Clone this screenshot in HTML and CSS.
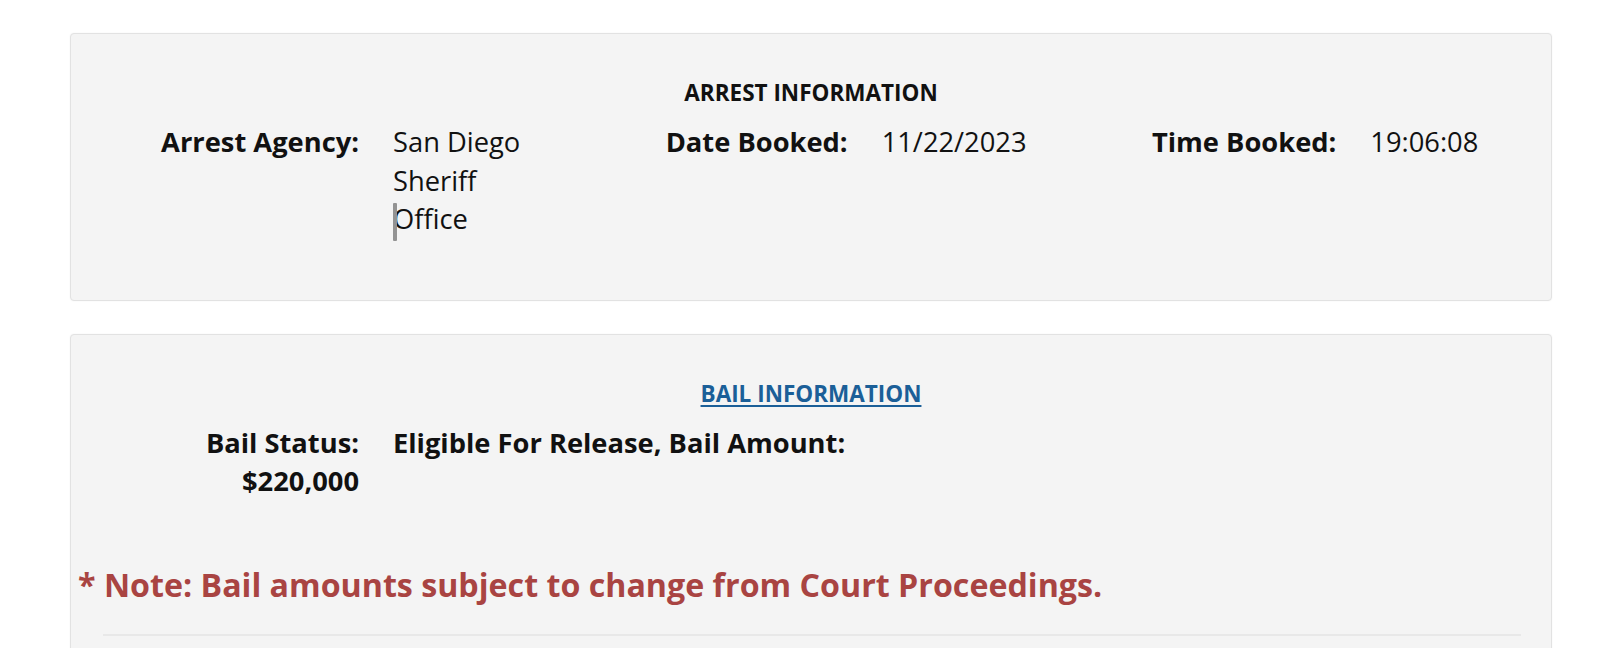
FILE: index.html
```html
<!DOCTYPE html>
<html lang="en">
<head>
<meta charset="utf-8">
<title>Booking Details</title>
<link rel="stylesheet" href="styles.css">
</head>
<body>
<main class="page">
  <section class="card card-arrest">
    <h3 class="card-title">ARREST INFORMATION</h3>
    <div class="info-grid">
      <div class="label">Arrest Agency:</div>
      <div class="value">San Diego Sheriff <span class="nowrap"><span class="caret"></span>Office</span></div>
      <div class="label">Date Booked:</div>
      <div class="value">11/22/2023</div>
      <div class="label">Time Booked:</div>
      <div class="value">19:06:08</div>
    </div>
  </section>

  <section class="card card-bail">
    <h3 class="card-title"><a class="title-link" href="#bail">BAIL INFORMATION</a></h3>
    <div class="bail-grid">
      <div class="label">Bail Status:<br>$220,000</div>
      <div class="value bold">Eligible For Release, Bail Amount:</div>
    </div>
    <h2 class="note">* Note: Bail amounts subject to change from Court Proceedings.</h2>
    <hr class="divider">
  </section>
</main>
</body>
</html>
```

FILE: styles.css
```css
html, body {
  margin: 0;
  padding: 0;
  background: #ffffff;
}

body {
  font-family: "Open Sans", "Noto Sans", "Liberation Sans", sans-serif;
  color: #111111;
  overflow: hidden;
}

.page {
  padding: 33px 48px 0 70px;
  display: flex;
  flex-direction: column;
  gap: 33px;
}

.card {
  background: #f4f4f4;
  border: 1px solid #e2e2e2;
  border-radius: 4px;
  box-shadow: 0 0 2px rgba(0, 0, 0, 0.06);
  padding: 43px 7px 61px 7px;
}

.card-title {
  margin: 0 0 14px 0;
  text-align: center;
  font-size: 22.5px;
  line-height: 32px;
  font-weight: 700;
  color: #111111;
}

.title-link {
  color: #1b5f98;
  text-decoration: underline;
  text-decoration-thickness: 2px;
  text-underline-offset: 3px;
}

.info-grid {
  display: grid;
  grid-template-columns: 298px 1fr 298px 1fr 298px 1fr;
  font-size: 27.3px;
  line-height: 38.5px;
}

.bail-grid {
  display: grid;
  grid-template-columns: 298px 1fr;
  font-size: 27.3px;
  line-height: 38.5px;
}

.label {
  text-align: right;
  font-weight: 700;
  padding-right: 17px;
}

.value {
  padding-left: 17px;
  padding-right: 17px;
  font-weight: 400;
}

.value.bold {
  font-weight: 700;
}

.nowrap {
  white-space: nowrap;
}

.caret {
  display: inline-block;
  width: 4px;
  height: 38px;
  margin-right: -4px;
  vertical-align: top;
  background: #939393;
  border-radius: 1px;
  transform: translateY(3px);
}

.card-bail {
  padding-bottom: 40px;
}

.note {
  margin: 66px 0 0 0;
  font-size: 32.2px;
  line-height: 35px;
  font-weight: 700;
  color: #a94442;
}

.divider {
  margin: 32px 23px 0 25px;
  border: 0;
  border-top: 2px solid #e8e8e8;
}
```
